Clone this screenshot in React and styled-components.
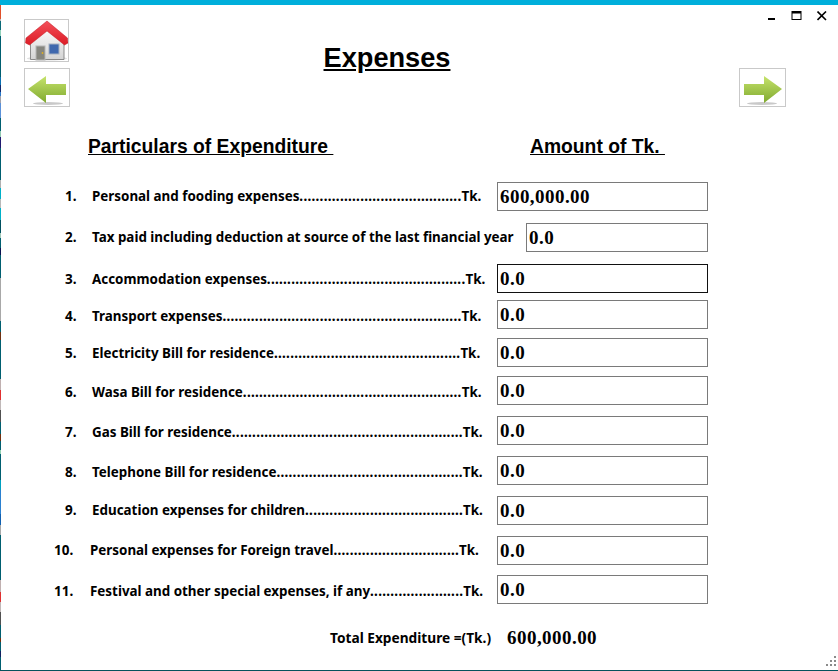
import React from "react";
import styled, { createGlobalStyle } from "styled-components";

const GlobalStyle = createGlobalStyle`
  html, body {
    margin: 0;
    padding: 0;
    background: #fff;
  }
`;

// colours of the desktop showing through at the left edge of the window
const edgeBands = [
  [19, "#e0502a"], [21, "#b8b8b8"], [30, "#0a6a78"], [36, "#8fd0b8"], [77, "#005f70"],
  [85, "#0a70b0"], [92, "#102a70"], [96, "#2a78c8"], [103, "#a0a0a8"], [118, "#5a90d8"],
  [131, "#005f70"], [137, "#8fc8b0"], [148, "#201a70"], [180, "#005f70"], [188, "#b0b0b0"],
  [199, "#00b0c8"], [208, "#b8b8b8"], [220, "#00b0c8"], [233, "#005060"], [238, "#9fc8b8"],
  [248, "#005f70"], [255, "#0a1050"], [278, "#005f70"], [321, "#a8a8a8"], [332, "#005f70"],
  [340, "#703010"], [379, "#005f70"], [390, "#c0b0b0"], [400, "#e03030"], [410, "#c0b8b8"],
  [422, "#505050"], [434, "#005f70"], [441, "#703010"], [450, "#005f70"], [454, "#90d0b0"],
  [480, "#005f70"], [490, "#00a0c0"], [514, "#2a80d0"], [525, "#1060b0"], [535, "#a8a8a8"],
  [580, "#005f70"], [592, "#c0b0b0"], [602, "#e03030"], [612, "#c0b8b8"], [625, "#505050"],
  [638, "#005f70"], [642, "#703010"], [651, "#005f70"], [657, "#102060"], [671, "#005f70"],
];

const edgeGradient = edgeBands
  .map(([end, color], i) => `${color} ${i ? edgeBands[i - 1][0] : 0}px ${end}px`)
  .join(", ");

const Page = styled.div`
  width: 838px;
  height: 671px;
  box-sizing: border-box;
  position: relative;
  overflow: hidden;
  background: #fff;
  border-top: 5px solid #00afdb;
  border-bottom: 1px solid #03525c;
  padding-left: 1px;
  font-family: "Noto Sans", "Open Sans", sans-serif;
  color: #000;
`;

const LeftEdge = styled.div`
  position: absolute;
  left: 0;
  top: -5px;
  width: 1px;
  height: 671px;
`;

const WindowControls = styled.div`
  position: absolute;
  top: 6px;
  right: 11px;
  display: flex;
  gap: 15px;
  align-items: center;
`;

const Header = styled.div`
  display: flex;
  justify-content: space-between;
  padding: 14px 52px 0 23px;
  height: 88px;
`;

const NavColumn = styled.div`
  display: flex;
  flex-direction: column;
  gap: 6px;
`;

const IconButton = styled.div`
  box-sizing: border-box;
  width: ${(p) => p.$w}px;
  height: ${(p) => p.$h}px;
  border: 1px solid #c9c9c9;
  margin-top: ${(p) => p.$top || 0}px;
  display: flex;
  align-items: center;
  justify-content: center;
`;

const Title = styled.h1`
  margin: 23px 0 0 0;
  font: bold 27.2px "Liberation Sans", Arial, sans-serif;
  text-decoration: underline;
  flex: 1;
  text-align: center;
  padding-right: 35px;
`;

const ColumnHeads = styled.div`
  display: flex;
  padding: 29px 0 0 87px;
  height: 47px;
  box-sizing: border-box;
  font: bold 19.3px "Liberation Sans", Arial, sans-serif;
`;

const Head = styled.div`
  width: ${(p) => p.$w}px;
  white-space: pre;
  text-decoration: underline;
`;

const Rows = styled.div`
  margin-top: 28px;
`;

const Row = styled.div`
  display: flex;
  align-items: center;
  height: 29px;
  margin-top: ${(p) => p.$gap}px;
  width: 707px;
`;

const Num = styled.span`
  box-sizing: border-box;
  width: 75px;
  flex: none;
  padding-left: ${(p) => p.$left}px;
  font-size: 13.5px;
  font-weight: 700;
  margin-top: ${(p) => p.$drop}px;
`;

const Label = styled.span`
  margin-left: ${(p) => p.$indent}px;
  margin-top: ${(p) => p.$drop}px;
  font-size: 13.4px;
  font-weight: 700;
  white-space: nowrap;
`;

const Leader = styled.span`
  letter-spacing: 0.29px;
`;

const Amount = styled.div`
  margin-left: auto;
  box-sizing: border-box;
  width: ${(p) => p.$w}px;
  height: 29px;
  border: 1px solid ${(p) => (p.$focused ? "#111" : "#7a7a7a")};
  padding: 0 2px;
  font: bold 19px/27px "Liberation Serif", "Times New Roman", serif;
  letter-spacing: 0.45px;
`;

const Total = styled.div`
  display: flex;
  align-items: center;
  margin-top: 22px;
  padding-left: 329px;
  font-size: 13.7px;
  font-weight: 700;
`;

const TotalValue = styled.span`
  margin: 1px 0 0 16px;
  font: bold 19px "Liberation Serif", "Times New Roman", serif;
  letter-spacing: 0.45px;
`;

const Grip = styled.svg`
  position: absolute;
  right: 2px;
  bottom: 4px;
`;

const rows = [
  { n: "1.", text: "Personal and fooding expenses", dots: 40, value: "600,000.00", gap: 0, drop: -2 },
  { n: "2.", text: "Tax paid including deduction at source of the last financial year", dots: 0, value: "0.0", gap: 12, drop: -2 },
  { n: "3.", text: "Accommodation expenses", dots: 49, value: "0.0", gap: 12, focused: true, drop: 1 },
  { n: "4.", text: "Transport expenses", dots: 59, value: "0.0", gap: 7, drop: 3 },
  { n: "5.", text: "Electricity Bill for residence", dots: 46, value: "0.0", gap: 9, drop: 1 },
  { n: "6.", text: "Wasa Bill for residence", dots: 54, value: "0.0", gap: 9, drop: 3 },
  { n: "7.", text: "Gas Bill for residence", dots: 57, value: "0.0", gap: 11, drop: 3 },
  { n: "8.", text: "Telephone Bill for residence", dots: 46, value: "0.0", gap: 11, drop: 3 },
  { n: "9.", text: "Education expenses for children", dots: 39, value: "0.0", gap: 11, drop: -2 },
  { n: "10.", text: "Personal expenses for Foreign travel", dots: 31, value: "0.0", gap: 11, drop: -2 },
  { n: "11.", text: "Festival and other special expenses, if any", dots: 23, value: "0.0", gap: 10, drop: 3 },
];

const Minimize = () => (
  <svg width="8" height="10" viewBox="0 0 8 10">
    <rect x="0" y="7" width="7" height="2" fill="#000" />
  </svg>
);

const Maximize = () => (
  <svg width="11" height="10" viewBox="0 0 11 10">
    <rect x="1" y="0.5" width="9" height="8" fill="none" stroke="#000" strokeWidth="1" />
    <rect x="1" y="0.5" width="9" height="2" fill="#000" />
  </svg>
);

const Close = () => (
  <svg width="10" height="10" viewBox="0 0 10 10">
    <path d="M0.5 0.5 L9 9 M9 0.5 L0.5 9" stroke="#000" strokeWidth="1.6" />
  </svg>
);

const HomeIcon = () => (
  <svg width="43" height="41" viewBox="0 0 43 41">
    <defs>
      <linearGradient id="roof" x1="0" y1="0" x2="0" y2="1">
        <stop offset="0" stopColor="#f4505a" />
        <stop offset="1" stopColor="#dc1c26" />
      </linearGradient>
      <linearGradient id="wall" x1="0" y1="0" x2="0" y2="1">
        <stop offset="0" stopColor="#fafafa" />
        <stop offset="1" stopColor="#d4d4d4" />
      </linearGradient>
    </defs>
    <ellipse cx="22" cy="38.5" rx="20" ry="2" fill="#e0e0e0" />
    <path d="M5.5 22 L22 9 L39 22 V39.5 H5.5 Z" fill="url(#wall)" stroke="#808080" strokeWidth="0.9" />
    <rect x="11" y="26" width="9" height="14" fill="#86867f" stroke="#b5b5b5" />
    <circle cx="17.5" cy="33" r="0.9" fill="#e0b020" />
    <rect x="24" y="24" width="10" height="10" fill="#3f68ae" stroke="#a6b0c0" />
    <path d="M1 18 L22 1 L42.5 18 L43 23 L39.5 25 L22 11 L4.5 25 L0.5 23 Z" fill="url(#roof)" stroke="#c01822" strokeWidth="0.5" />
  </svg>
);

const ArrowIcon = ({ id, flip }) => (
  <svg width="44" height="37" viewBox="0 0 44 37" style={flip ? { transform: "scaleX(-1)" } : undefined}>
    <defs>
      <linearGradient id={id} x1="0" y1="0" x2="0" y2="1">
        <stop offset="0" stopColor="#c6e36c" />
        <stop offset="1" stopColor="#7fa92f" />
      </linearGradient>
    </defs>
    <ellipse cx="23" cy="34.5" rx="15" ry="1.5" fill="#c9c9c9" />
    <path d="M3 20 L21 7 V15 H41 V26 H21 V34 Z" fill={`url(#${id})`} />
  </svg>
);

const App = () => {
  return (
    <>
      <GlobalStyle />
      <Page>
        <LeftEdge style={{ background: `linear-gradient(to bottom, ${edgeGradient})` }} />
        <WindowControls>
          <Minimize />
          <Maximize />
          <Close />
        </WindowControls>
        <Header>
          <NavColumn>
            <IconButton $w={45} $h={43}>
              <HomeIcon />
            </IconButton>
            <IconButton $w={46} $h={39}>
              <ArrowIcon id="back" />
            </IconButton>
          </NavColumn>
          <Title>Expenses</Title>
          <IconButton $w={47} $h={39} $top={49}>
            <ArrowIcon id="next" flip />
          </IconButton>
        </Header>
        <ColumnHeads>
          <Head $w={442}>Particulars of Expenditure </Head>
          <Head>Amount of Tk. </Head>
        </ColumnHeads>
        <Rows>
          {rows.map((row, i) => (
            <Row key={row.n} $gap={row.gap}>
              <Num $left={i > 8 ? 53 : 64} $drop={row.drop}>{row.n}</Num>
              <Label $indent={i > 8 ? 14 : 16} $drop={row.drop}>
                {row.text}
                {row.dots > 0 && <Leader>{".".repeat(row.dots)}</Leader>}
                {row.dots > 0 && "Tk."}
              </Label>
              <Amount $w={i === 1 ? 182 : 211} $focused={row.focused}>
                {row.value}
              </Amount>
            </Row>
          ))}
        </Rows>
        <Total>
          Total Expenditure =(Tk.)
          <TotalValue>600,000.00</TotalValue>
        </Total>
        <Grip width="10" height="10" viewBox="0 0 10 10" fill="#8a8a8a">
          <rect x="8" y="0" width="2" height="2" />
          <rect x="4" y="4" width="2" height="2" />
          <rect x="8" y="4" width="2" height="2" />
          <rect x="0" y="8" width="2" height="2" />
          <rect x="4" y="8" width="2" height="2" />
          <rect x="8" y="8" width="2" height="2" />
        </Grip>
      </Page>
    </>
  );
};

export default App;
